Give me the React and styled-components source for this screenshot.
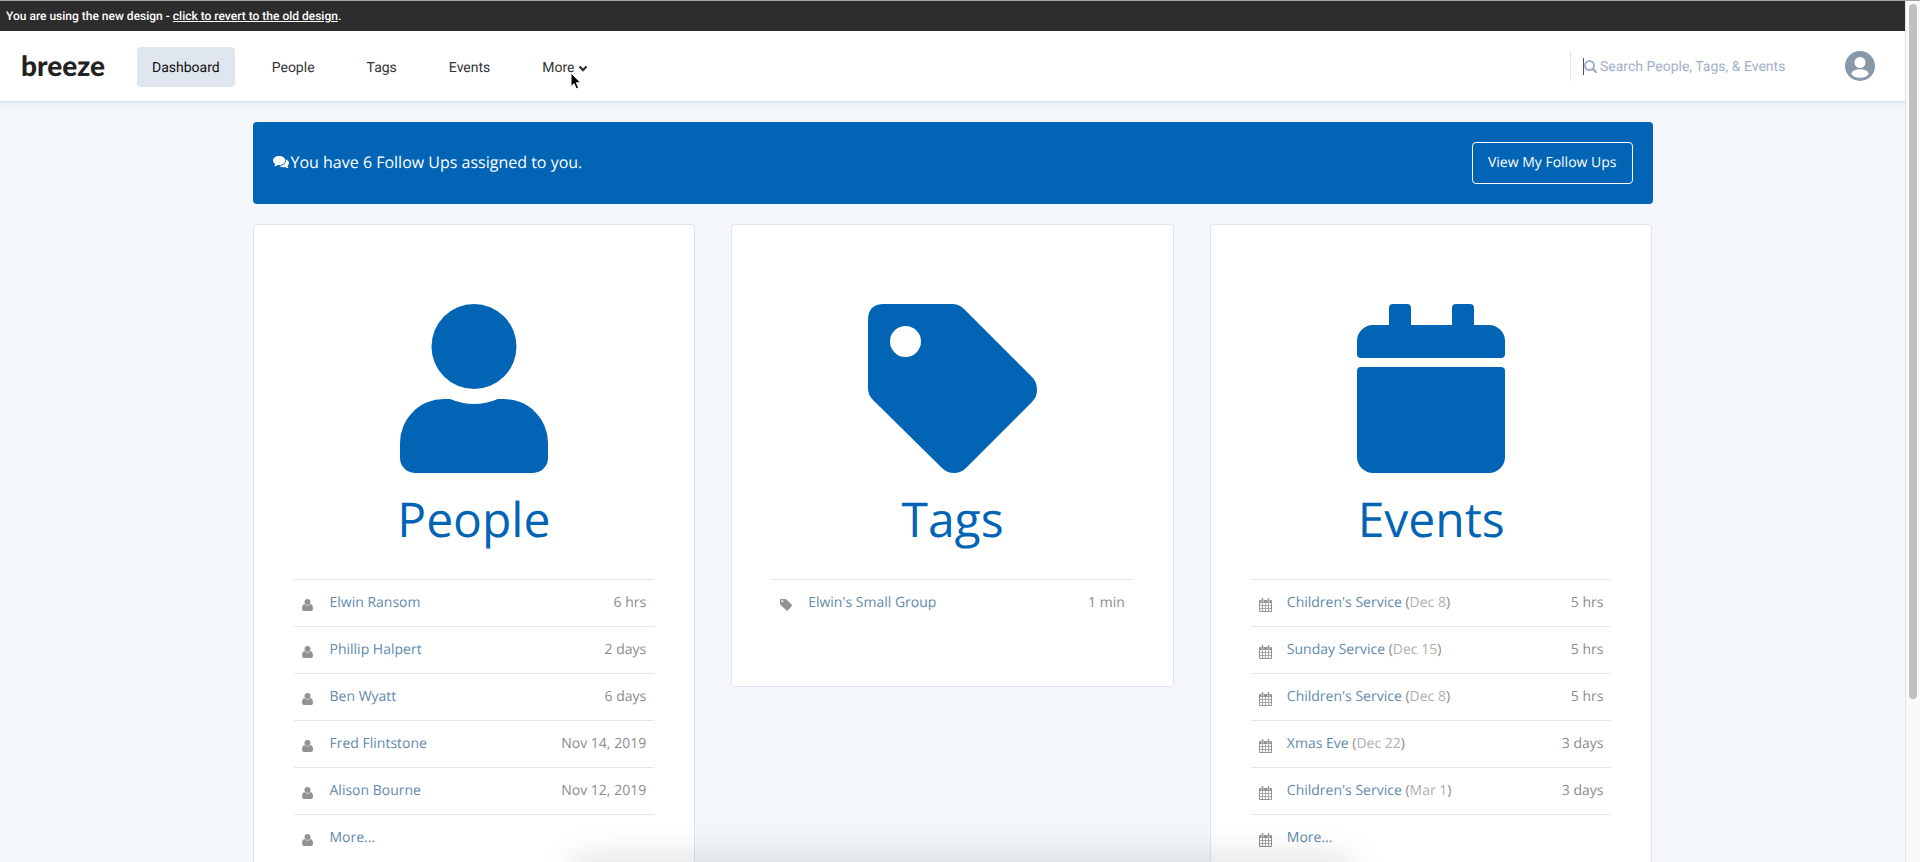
import React, { useState } from 'react';
import styled, { createGlobalStyle } from 'styled-components';

const people = [
    { name: 'Elwin Ransom', when: '6 hrs' },
    { name: 'Phillip Halpert', when: '2 days' },
    { name: 'Ben Wyatt', when: '6 days' },
    { name: 'Fred Flintstone', when: 'Nov 14, 2019' },
    { name: 'Alison Bourne', when: 'Nov 12, 2019' },
    { name: 'More...' }
];

const tags = [
    { name: "Elwin's Small Group", when: '1 min' }
];

const events = [
    { name: "Children's Service", date: 'Dec 8', when: '5 hrs' },
    { name: 'Sunday Service', date: 'Dec 15', when: '5 hrs' },
    { name: "Children's Service", date: 'Dec 8', when: '5 hrs' },
    { name: 'Xmas Eve', date: 'Dec 22', when: '3 days' },
    { name: "Children's Service", date: 'Mar 1', when: '3 days' },
    { name: 'More...' }
];

const PersonIcon = () => (
    <svg viewBox="0 0 148 169" height="169" fill="currentColor" aria-hidden="true">
        <circle cx="74" cy="42.5" r="42.5" />
        <path d="M44 95H50Q74 105 98 95H104A44 44 0 0 1 148 139V154A15 15 0 0 1 133 169H15A15 15 0 0 1 0 154V139A44 44 0 0 1 44 95Z" />
    </svg>
);

const TagIcon = () => (
    <svg viewBox="0 0 169 169" height="169" fill="currentColor" aria-hidden="true">
        <path fillRule="evenodd" d="M16 0H84Q91 0 96 5L164 73Q169 78 169 86Q169 93 164 98L98 164Q93 169 86 169Q79 169 74 164L5 96Q0 91 0 84V16Q0 0 16 0ZM37.500 22A15.500 15.500 0 1 0 37.500 53A15.500 15.500 0 1 0 37.500 22Z" />
    </svg>
);

const CalendarIcon = () => (
    <svg viewBox="0 0 148 169" height="169" fill="currentColor" aria-hidden="true">
        <path d="M0 50V37A16 16 0 0 1 16 21H32V4Q32 0 36 0H50Q54 0 54 4V21H95V4Q95 0 99 0H113Q117 0 117 4V21H132A16 16 0 0 1 148 37V50Q148 54 144 54H4Q0 54 0 50Z" />
        <path d="M4 63H144Q148 63 148 67V153A16 16 0 0 1 132 169H16A16 16 0 0 1 0 153V67Q0 63 4 63Z" />
    </svg>
);

const SmallPersonIcon = () => (
    <svg viewBox="0 0 11 12" width="11" height="12" fill="currentColor" aria-hidden="true">
        <circle cx="5.500" cy="3" r="3" />
        <path d="M2.500 5Q5.500 8 8.500 5Q11 5.500 11 9.500Q11 12 9 12H2Q0 12 0 9.500Q0 5.500 2.500 5Z" />
    </svg>
);

const SmallTagIcon = () => (
    <svg viewBox="0 0 12 12" width="12" height="12" fill="currentColor" aria-hidden="true">
        <path fillRule="evenodd" d="M1 0H5Q6 0 6.700 .7L11.600 5.600Q12.300 6.400 11.600 7.200L7.900 11.300Q7.100 12 6.300 11.300L.7 5.900Q0 5.200 0 4.500V1Q0 0 1 0ZM2.300 1.300A1 1 0 1 0 2.300 3.300A1 1 0 1 0 2.300 1.300Z" />
    </svg>
);

const SmallCalendarIcon = () => (
    <svg viewBox="0 0 13 14" width="13" height="14" aria-hidden="true">
        <path d="M1 2H12Q13 2 13 3V13Q13 14 12 14H1Q0 14 0 13V3Q0 2 1 2Z" fill="currentColor" />
        <path d="M2.500 0H4.500V4H2.500ZM8.500 0H10.500V4H8.500Z" fill="currentColor" stroke="#fff" strokeWidth=".4" />
        <path d="M1 5H3.200V7.300H1ZM4 5H6.200V7.300H4ZM7 5H9.200V7.300H7ZM10 5H12V7.300H10ZM1 8H3.200V10.200H1ZM4 8H6.200V10.200H4ZM7 8H9.200V10.200H7ZM10 8H12V10.200H10ZM1 11H3.200V13H1ZM4 11H6.200V13H4ZM7 11H9.200V13H7ZM10 11H12V13H10Z" fill="#fff" />
    </svg>
);

const CommentsIcon = () => (
    <svg viewBox="0 0 16 13" width="16" height="13" fill="currentColor" aria-hidden="true">
        <path d="M13.300 3.300Q16 4.700 16 7Q16 8.700 14.500 9.900Q14.800 11.200 15.800 12.200Q13.800 12.300 12.300 11Q8.600 11.700 6.300 10Q12.900 9.700 13.300 3.300Z" />
        <path d="M6.200 0C9.600 0 12.300 2 12.300 4.500S9.600 9 6.200 9Q5.500 9 4.700 8.900Q3.200 10.200 1 10.200Q2 9.200 2.100 7.900Q0 6.600 0 4.500C0 2 2.800 0 6.200 0Z" />
    </svg>
);

const ChevronIcon = () => (
    <svg viewBox="0 0 10 7" width="10" height="7" fill="none" stroke="currentColor" aria-hidden="true">
        <path d="M1.500 1.500L5 5L8.500 1.500" strokeWidth="2.400" />
    </svg>
);

const SearchIcon = () => (
    <svg viewBox="0 0 13 13" width="13" height="13" fill="none" stroke="currentColor" aria-hidden="true">
        <circle cx="5.500" cy="5.500" r="4.500" strokeWidth="2" />
        <path d="M9 9L12 12" strokeWidth="2.400" strokeLinecap="round" />
    </svg>
);

const AvatarIcon = () => (
    <svg viewBox="0 0 30 30" width="30" height="30" aria-hidden="true">
        <circle cx="15" cy="15" r="15" fill="#8799a9" />
        <circle cx="15" cy="11.500" r="5.500" fill="#fff" />
        <ellipse cx="15" cy="22.500" rx="8.500" ry="4.200" fill="#fff" />
    </svg>
);

const cards = [
    { title: 'People', icon: <PersonIcon />, rowIcon: <SmallPersonIcon />, rows: people },
    { title: 'Tags', icon: <TagIcon />, rowIcon: <SmallTagIcon />, rows: tags },
    { title: 'Events', icon: <CalendarIcon />, rowIcon: <SmallCalendarIcon />, rows: events }
];

function Card({ title, icon, rowIcon, rows }) {
    return (
        <CardStyled>
            <CardLink href="#">
                {icon}
                <h2>{title}</h2>
            </CardLink>
            <RowList>
                {rows.map((row, i) => (
                    <Row key={i}>
                        <span className="icon">{rowIcon}</span>
                        <span className="name">
                            <a href="#">{row.name}</a>
                            {row.date && <> (<time>{row.date}</time>)</>}
                        </span>
                        <span>{row.when}</span>
                    </Row>
                ))}
            </RowList>
        </CardStyled>
    );
}

function App() {
    const [active, setActive] = useState('Dashboard');
    const [search, setSearch] = useState('');

    return (
        <Shell>
            <GlobalStyle />
            <Page>
                <Notice>
                    You are using the new design - <a href="#">click to revert to the old design</a>.
                </Notice>
                <Header>
                    <Logo href="#">breeze</Logo>
                    <Nav>
                        {['Dashboard', 'People', 'Tags', 'Events'].map(item => (
                            <NavLink key={item} href="#" $active={active === item} onClick={() => setActive(item)}>
                                {item}
                            </NavLink>
                        ))}
                        <MoreButton type="button">
                            More <ChevronIcon />
                            <Pointer viewBox="0 0 12 18" width="12" height="18" aria-hidden="true">
                                <path d="M1 1V14.500L4 11.700L6.200 16.800L8.600 15.800L6.400 10.800H10.600Z" fill="#000" stroke="#fff" />
                            </Pointer>
                        </MoreButton>
                    </Nav>
                    <SearchBox>
                        <Caret />
                        <SearchIcon />
                        <input
                            type="text"
                            value={search}
                            aria-label="Search"
                            placeholder="Search People, Tags, & Events"
                            onChange={e => setSearch(e.target.value)}
                        />
                    </SearchBox>
                    <Avatar type="button" aria-label="Account">
                        <AvatarIcon />
                    </Avatar>
                </Header>
                <Content>
                    <Banner>
                        <p><CommentsIcon />You have 6 Follow Ups assigned to you.</p>
                        <button type="button">View My Follow Ups</button>
                    </Banner>
                    <Cards>
                        {cards.map(card => <Card key={card.title} {...card} />)}
                    </Cards>
                </Content>
                <BottomGlow />
            </Page>
            <ScrollRail>
                <ScrollThumb />
            </ScrollRail>
        </Shell>
    );
}

const GlobalStyle = createGlobalStyle`
    * {
        box-sizing: border-box;
    }
    body {
        margin: 0;
        font-family: 'Open Sans', sans-serif;
        background: #f3f7fb;
        text-rendering: geometricPrecision;
    }
    a {
        text-decoration: none;
    }
    button {
        font-family: inherit;
        text-rendering: inherit;
        cursor: pointer;
    }
`;

const Shell = styled.div`
    display: grid;
    grid-template-columns: 1fr 15px;
    height: 100vh;
    overflow: hidden;
    border-top: 1px solid #a3a3a3;
`;

const Page = styled.div`
    position: relative;
    min-width: 0;
    overflow: hidden;
`;

const Notice = styled.div`
    padding: 0 6px;
    background: #2d2d2d;
    color: #fff;
    font-family: Roboto, sans-serif;
    font-size: 12px;
    font-weight: 500;
    line-height: 30px;
    a {
        color: inherit;
        text-decoration: underline;
    }
`;

const Header = styled.header`
    display: flex;
    align-items: center;
    height: 71px;
    padding: 0 30px 0 21px;
    background: #fff;
    border-bottom: 1px solid #dce2ea;
    box-shadow: 0 1px 4px rgba(60, 90, 140, .12);
    font-family: Roboto, sans-serif;
    font-size: 14px;
`;

const Logo = styled.a`
    width: 116px;
    padding-bottom: 3px;
    color: #222;
    font-family: Lato, sans-serif;
    font-size: 28px;
    font-weight: 900;
    line-height: 38px;
`;

const Nav = styled.nav`
    display: flex;
    flex: 1;
    gap: 22px;
    padding-top: 2px;
`;

const NavLink = styled.a`
    padding: 2px 15px 0;
    border-radius: 4px;
    background: ${props => (props.$active ? '#dfe6ef' : 'transparent')};
    color: ${props => (props.$active ? '#111' : '#333')};
    line-height: 38px;
`;

const MoreButton = styled.button`
    position: relative;
    display: flex;
    align-items: center;
    gap: 3px;
    padding: 2px 15px 0;
    border: none;
    background: none;
    color: #333;
    font-size: inherit;
`;

const Pointer = styled.svg`
    position: absolute;
    left: 43px;
    top: 25px;
`;

const SearchBox = styled.label`
    position: relative;
    display: flex;
    align-items: center;
    gap: 3px;
    height: 30px;
    margin-right: 45px;
    padding-left: 13px;
    border-left: 1px solid #e3e6ea;
    color: #9fb1c9;
    input {
        width: 200px;
        padding: 2px 0 0;
        border: none;
        outline: none;
        background: transparent;
        color: #333;
        font-family: inherit;
        font-size: inherit;
        text-rendering: inherit;
        &::placeholder {
            color: #9fb1c9;
            opacity: 1;
        }
    }
`;

const Caret = styled.span`
    position: absolute;
    left: 12px;
    top: 7px;
    width: 1px;
    height: 17px;
    background: #555;
`;

const Avatar = styled.button`
    display: flex;
    padding: 0;
    border: none;
    background: none;
`;

const Content = styled.main`
    max-width: 1440px;
    margin: 0 auto;
    padding: 20px;
`;

const Banner = styled.section`
    display: flex;
    align-items: center;
    justify-content: space-between;
    padding: 20px;
    border-radius: 4px;
    background: #0264b4;
    color: #fff;
    p {
        display: flex;
        align-items: center;
        gap: 2px;
        margin: 0;
        padding-bottom: 2px;
        font-size: 16px;
        font-weight: 500;
    }
    button {
        height: 42px;
        padding: 0 15px 1px;
        border: 1px solid #fff;
        border-radius: 4px;
        background: transparent;
        color: #fff;
        font-size: 14px;
        font-weight: 500;
    }
`;

const Cards = styled.div`
    display: grid;
    grid-template-columns: repeat(3, 1fr);
    align-items: start;
    gap: 36px;
    margin-top: 20px;
`;

const CardStyled = styled.section`
    padding: 79px 40px 60px;
    border: 1px solid #dfe5ef;
    border-radius: 4px;
    background: #fff;
`;

const CardLink = styled.a`
    display: flex;
    flex-direction: column;
    align-items: center;
    color: #0264b4;
    h2 {
        margin: 14px 0 26px;
        font-size: 48px;
        font-weight: 400;
        line-height: 66px;
    }
`;

const RowList = styled.ul`
    margin: 0;
    padding: 0;
    list-style: none;
`;

const Row = styled.li`
    display: flex;
    align-items: center;
    height: 47px;
    padding: 0 8px 1px;
    border-top: 1px solid #e4e6e9;
    color: #8b8b8b;
    font-size: 14px;
    .icon {
        display: flex;
        width: 28px;
        padding-top: 5px;
        color: #929292;
    }
    .name {
        flex: 1;
    }
    a {
        color: #6289ac;
    }
    time {
        color: #b0b0b0;
    }
`;

const BottomGlow = styled.div`
    position: absolute;
    left: 30%;
    right: 29%;
    bottom: -20px;
    height: 20px;
    border-radius: 20px;
    box-shadow: 0 0 36px rgba(0, 0, 0, .2);
`;

const ScrollRail = styled.div`
    padding: 3px 3px 0 3px;
    border-left: 1px solid #e3e3e3;
    background: #fafafa;
`;

const ScrollThumb = styled.div`
    width: 8px;
    height: 81%;
    border-radius: 4px;
    background: #c1c1c1;
`;

export default App;
